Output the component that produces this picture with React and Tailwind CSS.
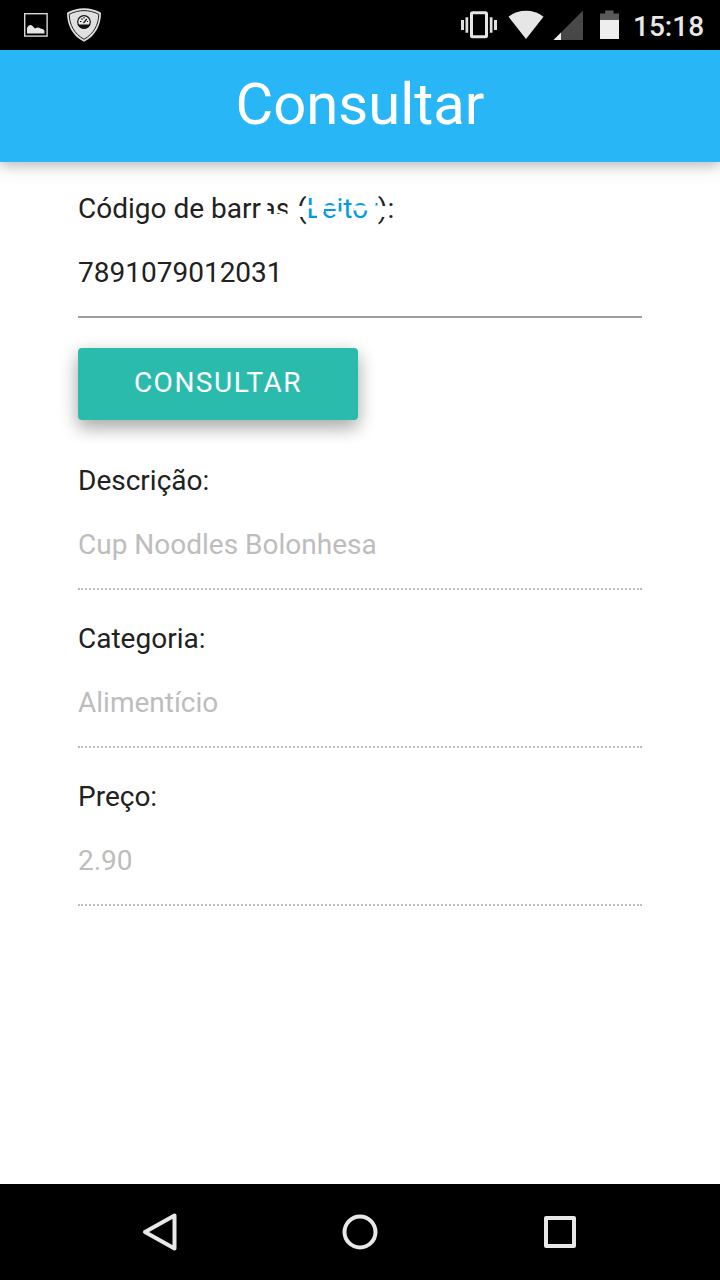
const fields = [
  { label: 'Descrição:', value: 'Cup Noodles Bolonhesa' },
  { label: 'Categoria:', value: 'Alimentício' },
  { label: 'Preço:', value: '2.90' },
];

function StatusBar() {
  return (
    <div className="flex h-[50px] shrink-0 items-center justify-between bg-black">
      <svg width="130" height="50" viewBox="0 0 130 50">
        <rect x="24.7" y="13.7" width="22.4" height="22.4" fill="none" stroke="#d8d8d8" strokeWidth="1.4" />
        <path d="M27 33.500v-5.500c1.500-3 3.500-4 5.500-2l2.500 2.500c2-1.500 4-1.500 5.500 0 2 .3 3.500 1 4 2.500v2.500z" fill="#e6e6e6" />
        <path d="M84 8.300c6 0 12 1.600 17 4.500 0 12-5 23-17 29-12-6-17-17-17-29 5-2.900 11-4.500 17-4.500z" fill="#e0e0e0" />
        <path d="M84 10.600c5 0 10 1.300 14.800 3.700-.3 10.500-5 19.500-14.800 25-9.800-5.500-14.500-14.500-14.800-25 4.800-2.400 9.800-3.700 14.800-3.700z" fill="none" stroke="#222" strokeWidth="1" />
        <circle cx="84" cy="22" r="6.300" fill="#e8e8e8" stroke="#111" strokeWidth="1.200" />
        <path d="M78 24.500h12a6.500 6.500 0 0 1-12 0z" fill="#111" />
        <path d="M83.500 23l3.300-4M80 21.500h1.500M81.500 18.500l1 1M84 17.300v1.300M87 21.500h1" stroke="#111" strokeWidth="1.200" />
      </svg>
      <div className="flex h-[50px]">
        <svg width="180" height="50" viewBox="450 0 180 50">
          <rect x="471.500" y="12.800" width="15" height="24" rx="1" fill="none" stroke="#e6e6e6" strokeWidth="3" />
          <path d="M461 20h3v10h-3zM465.500 17.200h2.700v15.500h-2.700zM489.800 17.200h2.700v15.500h-2.700zM494 20h3v10h-3z" fill="#e0e0e0" />
          <path d="M508.500 16.700a29 29 0 0 1 35 0L526 39z" fill="#e6e6e6" />
          <path d="M583 10.500V40h-29.500z" fill="#484848" />
          <path d="M561 32.500V40h-7.500z" fill="#eee" />
          <path d="M600 20v-6.500h5.200v-3h8.300v3h5.500V20z" fill="#5a5a5a" />
          <path d="M600 20h19v19h-19z" fill="#eee" />
        </svg>
        <span className="w-[90px] pl-[3px] text-[28px] leading-[54px] font-medium text-[#e8e8e8]">15:18</span>
      </div>
    </div>
  );
}

// White smudges that hide parts of the "(Leitor)" link text
function LabelSmudges() {
  return (
    <svg className="absolute top-0 left-[182px]" width="140" height="40" viewBox="260 189 140 40" fill="#fff">
      <path d="M261.500 202h6v18h-6zM261.500 214h30v7h-30zM287.500 202h4v18h-4z" />
      <path d="M297 206h11v11h-11zM307 205h7v3.500h-7zM317 212h5v8h-5z" />
      <path d="M321 205.500h17v3.500h-17zM333 207h5v2h-5zM321 209h3v3h-3z" />
      <path d="M338 211.500h6v8h-6z" />
      <path d="M354 205.500h15v5h-15z" />
      <path d="M369.500 199h6v20h-6zM375 206h4v13h-4zM378 206h9v11h-9z" />
    </svg>
  );
}

function Field({ label, value }) {
  return (
    <div className="h-[158px]">
      <label className="block pt-[15px] text-[28px] leading-[40px] text-[#212121]">{label}</label>
      <div className="mt-px h-[88px] border-b-2 border-dotted border-[#bdbdbd] text-[28px] leading-[86px] text-[#bdbdbd]">
        {value}
      </div>
    </div>
  );
}

function NavBar() {
  return (
    <div className="h-24 shrink-0 bg-black">
      <svg width="720" height="96" viewBox="0 1184 720 96" fill="none" stroke="#e8e8e8" strokeWidth="4" strokeLinejoin="round">
        <path d="M145 1232l29.500-16.500v33z" />
        <circle cx="360" cy="1232" r="15.500" />
        <rect x="546" y="1218" width="28" height="28" />
      </svg>
    </div>
  );
}

export default function App() {
  return (
    <div className="flex h-[1280px] w-[720px] flex-col overflow-hidden bg-white font-['Roboto',sans-serif]">
      <StatusBar />
      <header className="h-[112px] shrink-0 bg-[#29b6f6] text-center text-[58px] leading-[108px] text-white shadow-[0_4px_10px_rgba(0,0,0,0.16),0_4px_20px_rgba(0,0,0,0.12)]">
        Consultar
      </header>
      <main className="flex-1 px-[78px] pt-[27px]">
        <label className="relative block text-[28px] leading-[40px] text-[#212121]">
          Código de barras (<a className="text-[#039be5]">Leitor</a>):
          <LabelSmudges />
        </label>
        <div className="h-[89px] border-b-2 border-[#9e9e9e] text-[28px] leading-[88px] text-[#212121]">
          7891079012031
        </div>
        <button className="mt-[30px] block h-[72px] w-[280px] rounded-[4px] bg-[#2bbbad] pb-[2px] text-[28px] leading-[70px] tracking-[1.5px] text-white shadow-[0_8px_17px_rgba(0,0,0,0.2),0_6px_20px_rgba(0,0,0,0.19)]">
          CONSULTAR
        </button>
        <div className="mt-[26px]">
          {fields.map((field) => (
            <Field key={field.label} label={field.label} value={field.value} />
          ))}
        </div>
      </main>
      <NavBar />
    </div>
  );
}
